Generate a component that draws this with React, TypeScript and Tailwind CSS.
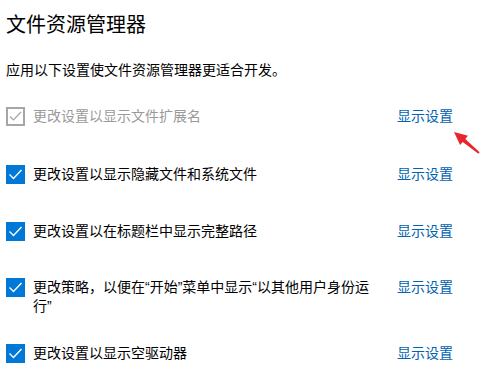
import React from "react";

const FONT = { fontFamily: '"Liberation Sans", "Noto Sans CJK SC", sans-serif' };

function Check({ disabled }: { disabled?: boolean }) {
  if (disabled) {
    return (
      <div className="w-[19px] h-[19px] shrink-0 border-2 border-[#a6a6a6] bg-white flex items-center justify-center">
        <svg width="15" height="15" viewBox="0 0 15 15">
          <path d="M2 7.5 L5.5 11 L13 3" fill="none" stroke="#a6a6a6" strokeWidth="1.2" />
        </svg>
      </div>
    );
  }
  return (
    <div className="w-[19px] h-[19px] shrink-0 bg-[#0078d7] flex items-center justify-center">
      <svg width="19" height="19" viewBox="0 0 19 19">
        <path d="M3.5 9.5 L7.5 13.5 L15.5 5" fill="none" stroke="#ffffff" strokeWidth="1.4" />
      </svg>
    </div>
  );
}

function Row({ label, disabled, className }: { label: string; disabled?: boolean; className?: string }) {
  return (
    <div className={"flex items-start " + (className ?? "")}>
      <Check disabled={disabled} />
      <div
        className={
          "ml-[8px] w-[345px] text-[14px] leading-[19px] " + (disabled ? "text-[#9a9a9a]" : "text-[#000000]")
        }
      >
        {label}
      </div>
      <div className="ml-[19px] text-[14px] leading-[19px] text-[#0063b1] whitespace-nowrap">显示设置</div>
    </div>
  );
}

export default function App() {
  return (
    <div className="relative w-[489px] h-[375px] bg-white overflow-hidden pl-[6px]" style={FONT}>
      <div className="pt-[11px] text-[20px] leading-[28px] text-black">文件资源管理器</div>
      <div className="mt-[21px] text-[14px] leading-[20px] text-black">应用以下设置使文件资源管理器更适合开发。</div>
      <Row className="mt-[27px]" label="更改设置以显示文件扩展名" disabled />
      <Row className="mt-[39px]" label="更改设置以显示隐藏文件和系统文件" />
      <Row className="mt-[38px]" label="更改设置以在标题栏中显示完整路径" />
      <Row className="mt-[37px]" label="更改策略，以便在“开始”菜单中显示“以其他用户身份运行”" />
      <Row className="mt-[28px]" label="更改设置以显示空驱动器" />
      <svg className="absolute left-[445px] top-[125px]" width="44" height="35" viewBox="0 0 44 35">
        <polygon
          points="9,7 22.9,10.8 20.3,13.9 34.6,27.2 33.4,28.8 17.7,16.9 15.1,20"
          fill="#e8262b"
        />
      </svg>
    </div>
  );
}
